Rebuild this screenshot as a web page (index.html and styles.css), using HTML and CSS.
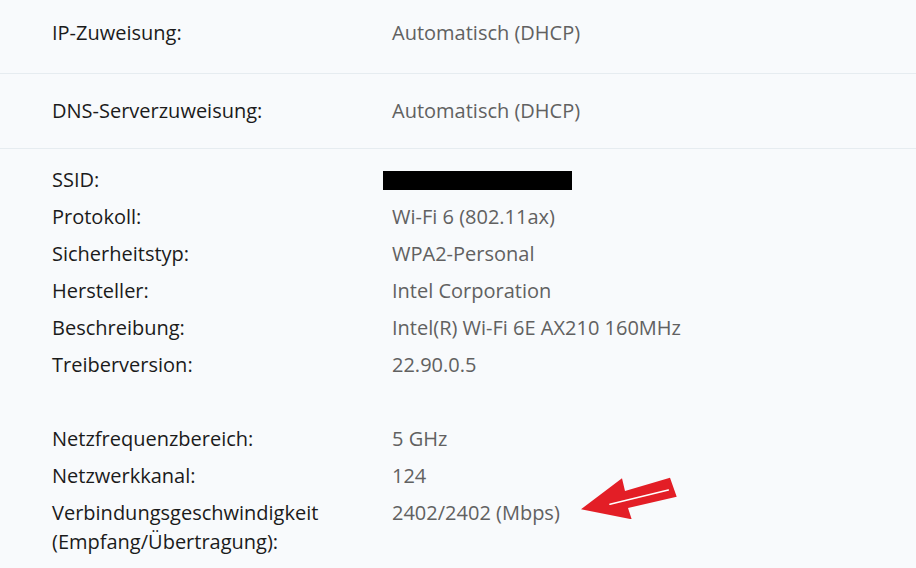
FILE: index.html
```html
<!DOCTYPE html>
<html lang="de">
<head>
<meta charset="utf-8">
<title>Netzwerkeigenschaften</title>
<link rel="stylesheet" href="styles.css">
</head>
<body>
<main class="panel">
  <section class="section first">
    <div class="row">
      <span class="label">IP-Zuweisung:</span>
      <span class="value">Automatisch (DHCP)</span>
    </div>
  </section>
  <section class="section">
    <div class="row">
      <span class="label">DNS-Serverzuweisung:</span>
      <span class="value">Automatisch (DHCP)</span>
    </div>
  </section>
  <section class="list">
    <div class="group">
      <div class="row">
        <span class="label">SSID:</span>
        <span class="value"><span class="redact"></span></span>
      </div>
      <div class="row">
        <span class="label">Protokoll:</span>
        <span class="value">Wi-Fi 6 (802.11ax)</span>
      </div>
      <div class="row">
        <span class="label">Sicherheitstyp:</span>
        <span class="value">WPA2-Personal</span>
      </div>
      <div class="row">
        <span class="label">Hersteller:</span>
        <span class="value">Intel Corporation</span>
      </div>
      <div class="row">
        <span class="label">Beschreibung:</span>
        <span class="value">Intel(R) Wi-Fi 6E AX210 160MHz</span>
      </div>
      <div class="row">
        <span class="label">Treiberversion:</span>
        <span class="value">22.90.0.5</span>
      </div>
    </div>
    <div class="group">
      <div class="row">
        <span class="label">Netzfrequenzbereich:</span>
        <span class="value">5 GHz</span>
      </div>
      <div class="row">
        <span class="label">Netzwerkkanal:</span>
        <span class="value">124</span>
      </div>
      <div class="row">
        <span class="label">Verbindungsgeschwindigkeit<br>(Empfang/Übertragung):</span>
        <span class="value speed">2402/2402 (Mbps)
          <svg class="arrow" width="100" height="46" viewBox="0 0 100 46" aria-hidden="true">
            <polygon points="1,36.3 42,5.3 45,18 90,4.7 96.7,23.7 48,35 51.7,46.3" fill="#e31e26"/>
            <line x1="30" y1="31.3" x2="88.3" y2="17" stroke="#ffffff" stroke-width="1.6" stroke-linecap="round"/>
          </svg>
        </span>
      </div>
    </div>
  </section>
</main>
</body>
</html>
```
FILE: styles.css
```css
html, body {
  margin: 0;
  padding: 0;
}
body {
  background: #f8fafc;
  font-family: "Open Sans", "Noto Sans", "Liberation Sans", sans-serif;
  font-size: 20px;
  color: #1b1b1b;
  width: 916px;
  height: 568px;
  overflow: hidden;
}
.panel {
  display: flex;
  flex-direction: column;
}
.section {
  height: 75px;
  border-bottom: 1px solid #e6ecf0;
  display: flex;
  align-items: center;
  padding-bottom: 2px;
  box-sizing: border-box;
}
.section.first {
  height: 74px;
  padding-bottom: 8px;
}
.row {
  display: grid;
  grid-template-columns: 340px 1fr;
  padding-left: 52px;
  line-height: 29px;
}
.label {
  color: #1b1b1b;
}
.value {
  color: #616161;
}
.list {
  padding-top: 16px;
  display: flex;
  flex-direction: column;
  gap: 45px;
}
.group {
  display: flex;
  flex-direction: column;
  gap: 8px;
}
.redact {
  display: inline-block;
  width: 189px;
  height: 19px;
  background: #000;
  margin-left: -9px;
  vertical-align: -3px;
}
.speed {
  position: relative;
}
.arrow {
  position: absolute;
  left: 188px;
  top: -25px;
}
```
